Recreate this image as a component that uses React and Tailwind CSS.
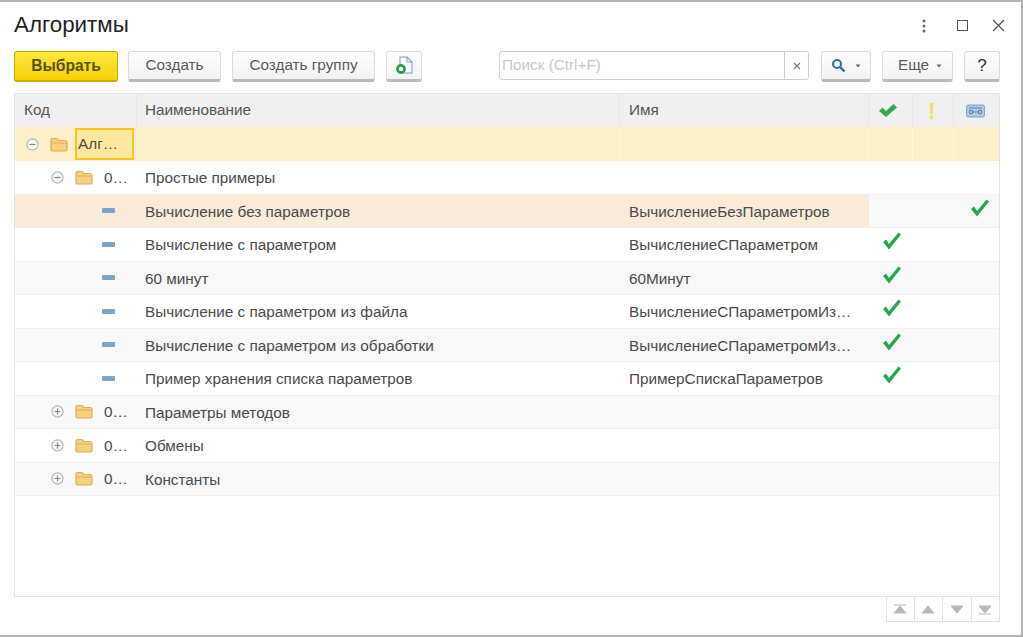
const Folder = () => (
  <svg width="18" height="15" viewBox="0 0 18 15" className="shrink-0">
    <path d="M1 3.5 Q1 1.5 3 1.5 H7 L9 3.5 H15 Q17 3.5 17 5.5 V12 Q17 14 15 14 H3 Q1 14 1 12 Z" fill="#f6d27e" stroke="#dcae5c" strokeWidth="1.2" />
    <path d="M1.5 6 H16.5" stroke="#dcae5c" strokeWidth="1" />
  </svg>
);
const Toggle = ({ open }) => (
  <svg width="13" height="13" viewBox="0 0 13 13" className="shrink-0">
    <circle cx="6.5" cy="6.5" r="5.6" fill="#f7f7f7" stroke="#b5b5b5" strokeWidth="1.1" />
    <path d={open ? "M3.5 6.5 H9.5" : "M3.5 6.5 H9.5 M6.5 3.5 V9.5"} stroke="#8a8a8a" strokeWidth="1.2" />
  </svg>
);
const Dash = () => <span className="block w-[13px] h-[5px] rounded-[1px] bg-[#7ba4c9]" />;
const Check = () => (
  <svg width="21" height="20" viewBox="0 0 21 20">
    <path d="M2 11 L5 8.5 L8 13 L17.5 1.5 L20 3.5 L8 18.5 Z" fill="#27a84a" />
  </svg>
);
const HeadCheck = () => (
  <svg width="20" height="15" viewBox="0 0 20 15">
    <path d="M1 8 L4.5 4.5 L8 8 L15.5 1 L19 4.5 L8 14 Z" fill="#2fa84f" />
  </svg>
);
const Btn = ({ w, children, cls = "" }) => (
  <div className={`h-[31px] rounded-[3px] border border-[#dcdcdc] border-b-[3px] border-b-[#bcbcbc] bg-gradient-to-b from-white to-[#f2f2f2] flex items-center justify-center text-[#5a5a5a] text-[15.3px] shrink-0 ${w} ${cls}`}>
    {children}
  </div>
);

const cols = ["w-[122px]", "w-[483px]", "w-[249px]", "w-[44px]", "w-[41px]", "w-[47px]"];

const Row = ({ bg = "bg-white", level, open, icon, code, name, id, check, checkLast, hl = "" }) => (
  <div className={`flex h-[33.5px] items-center border-b border-[#f0f0f0] text-[15.3px] text-[#4a4a4a] ${bg}`}>
    <div className={`w-[122px] shrink-0 h-full flex items-center relative ${hl} ${level === 1 ? "pl-[36px]" : "pl-[87px]"}`}>
      {icon === "dash" ? <Dash /> : (
        <div className="flex items-center">
          <Toggle open={open} />
          <span className="ml-[11px]"><Folder /></span>
          <span className="ml-[11px] pt-[2px]">{code}</span>
        </div>
      )}
    </div>
    <div className={`w-[483px] shrink-0 h-full flex items-center pl-[8px] pt-[3px] whitespace-nowrap ${hl}`}>{name}</div>
    <div className={`w-[249px] shrink-0 h-full flex items-center pl-[9px] pt-[3px] whitespace-nowrap ${hl}`}>{id}</div>
    <div className="w-[44px] shrink-0 h-full flex items-center justify-center">{check && <span className="-mt-[6px]"><Check /></span>}</div>
    <div className="w-[41px] shrink-0 h-full" />
    <div className="w-[47px] shrink-0 h-full flex items-center justify-center">{checkLast && <span className="-mt-[6px] ml-[4px]"><Check /></span>}</div>
  </div>
);

export default function App() {
  return (
    <div className="w-[1023px] h-[637px] bg-white border-t-2 border-r-2 border-b-2 border-[#b4b4b4] flex flex-col overflow-hidden font-['Liberation_Sans',Arial,sans-serif]">
      <div className="flex items-center justify-between h-[49px] pl-[14px] pr-[16px] shrink-0">
        <span className="text-[22.4px] text-[#1f1f1f] leading-none -mt-[3px]">Алгоритмы</span>
        <div className="flex items-center -mt-[2px]">
          <svg width="6" height="14" viewBox="0 0 6 14" className="mr-[30px]">
            <circle cx="3" cy="2" r="1.5" fill="#666" /><circle cx="3" cy="7" r="1.5" fill="#666" /><circle cx="3" cy="12" r="1.5" fill="#666" />
          </svg>
          <span className="block w-[11px] h-[11px] border-[1.5px] border-[#555] mr-[24px]" />
          <svg width="13" height="13" viewBox="0 0 13 13">
            <path d="M1 1 L12 12 M12 1 L1 12" stroke="#555" strokeWidth="1.2" />
          </svg>
        </div>
      </div>

      <div className="flex items-start h-[42px] pl-[14px] shrink-0">
        <div className="w-[104px] h-[31px] rounded-[3px] border border-[#c9a800] border-b-[2px] bg-gradient-to-b from-[#fde93a] to-[#f5cf00] flex items-center justify-center font-bold text-[15.6px] text-[#5c5316] shrink-0">Выбрать</div>
        <Btn w="w-[93px] ml-[10px]">Создать</Btn>
        <Btn w="w-[143px] ml-[11px]">Создать группу</Btn>
        <Btn w="w-[36px] ml-[11px]">
          <svg width="19" height="19" viewBox="0 0 19 19">
            <path d="M5 1 H12 L17 6 V17 H5 Z" fill="#fff" stroke="#7f9db8" strokeWidth="1.1" />
            <path d="M12 1 V6 H17" fill="none" stroke="#7f9db8" strokeWidth="1" />
            <circle cx="6" cy="13" r="3.6" fill="#fff" stroke="#22a045" strokeWidth="2.6" />
          </svg>
        </Btn>
        <div className="ml-[77px] w-[310px] h-[29px] rounded-[3px] border border-[#cfcfcf] flex shrink-0">
          <div className="flex-1 flex items-center pl-[2px] text-[15.3px] text-[#c8c8c8]">Поиск (Ctrl+F)</div>
          <div className="w-[24px] border-l border-[#cfcfcf] flex items-center justify-center">
            <svg width="8" height="8" viewBox="0 0 8 8"><path d="M1 1 L7 7 M7 1 L1 7" stroke="#777" strokeWidth="1.2" /></svg>
          </div>
        </div>
        <Btn w="w-[50px] ml-[12px]">
          <svg width="15" height="15" viewBox="0 0 15 15">
            <circle cx="6" cy="6" r="4" fill="none" stroke="#2f6f9f" strokeWidth="2" />
            <path d="M9 9 L13.5 13.5" stroke="#2f6f9f" strokeWidth="2.4" />
          </svg>
          <svg width="6" height="4" viewBox="0 0 6 4" className="ml-[9px]"><path d="M0.5 0.5 H5.5 L3 3.5 Z" fill="#666" /></svg>
        </Btn>
        <Btn w="w-[71px] ml-[11px] pl-[5px]">
          Еще
          <svg width="6" height="4" viewBox="0 0 6 4" className="ml-[7px]"><path d="M0.5 0.5 H5.5 L3 3.5 Z" fill="#666" /></svg>
        </Btn>
        <Btn w="w-[36px] ml-[11px]"><span className="text-[#333] text-[17px]">?</span></Btn>
      </div>

      <div className="ml-[14px] w-[986px] h-[504px] border border-[#e4e4e4] flex flex-col shrink-0 bg-white relative">
        <div className="flex h-[33px] bg-[#f0f0f0] text-[15.3px] text-[#555] shrink-0">
          <div className={`${cols[0]} shrink-0 flex items-center pl-[9px] border-r border-[#e6e6e6]`}>Код</div>
          <div className={`${cols[1]} shrink-0 flex items-center pl-[8px] border-r border-[#e6e6e6]`}>Наименование</div>
          <div className={`${cols[2]} shrink-0 flex items-center pl-[9px] border-r border-[#e6e6e6]`}>Имя</div>
          <div className={`${cols[3]} shrink-0 flex items-center justify-center pr-[6px] border-r border-[#e6e6e6]`}><HeadCheck /></div>
          <div className={`${cols[4]} shrink-0 flex items-center justify-center pr-[4px] border-r border-[#e6e6e6]`}>
            <svg width="7" height="18" viewBox="0 0 7 18"><path d="M1.5 1 H5.5 L4.8 12 H2.2 Z" fill="#efe06a" /><circle cx="3.5" cy="15.5" r="2" fill="#efe06a" /></svg>
          </div>
          <div className={`${cols[5]} shrink-0 flex items-center justify-center pr-[4px]`}>
            <svg width="19" height="14" viewBox="0 0 19 14">
              <rect x="0.5" y="1" width="18" height="12" rx="1.5" fill="#a9cbe8" stroke="#7ea7c8" />
              <circle cx="5" cy="8" r="1.8" fill="none" stroke="#4f7ea3" />
              <circle cx="14" cy="8" r="1.8" fill="none" stroke="#4f7ea3" />
              <path d="M6.8 8 H12.2 M3 4 H16" stroke="#4f7ea3" strokeWidth="0.8" />
            </svg>
          </div>
        </div>

        <div className="flex h-[34px] items-stretch bg-[#fcefc9] text-[15.3px] text-[#4a4a4a] shrink-0">
          <div className="w-[122px] shrink-0 flex items-center pl-[11px]">
            <Toggle open />
            <span className="ml-[11px]"><Folder /></span>
            <div className="ml-[7px] w-[59px] h-[32px] bg-[#fde89e] border-2 border-[#f3c526] flex items-center pl-[1px] text-[#4a4a4a] whitespace-nowrap">Алг…</div>
          </div>
          <div className="w-[483px] shrink-0 border-r border-[#fdf5dc]" />
          <div className="w-[249px] shrink-0 border-r border-[#fdf5dc]" />
          <div className="w-[44px] shrink-0 border-r border-[#fdf5dc]" />
          <div className="w-[41px] shrink-0 border-r border-[#fdf5dc]" />
        </div>

        <Row level={1} open code="0…" name="Простые примеры" />
        <Row bg="bg-[#f8f8f8]" hl="bg-[#faebd9]" icon="dash" name="Вычисление без параметров" id="ВычислениеБезПараметров" checkLast />
        <Row icon="dash" name="Вычисление с параметром" id="ВычислениеСПараметром" check />
        <Row bg="bg-[#f8f8f8]" icon="dash" name="60 минут" id="60Минут" check />
        <Row icon="dash" name="Вычисление с параметром из файла" id="ВычислениеСПараметромИз…" check />
        <Row bg="bg-[#f8f8f8]" icon="dash" name="Вычисление с параметром из обработки" id="ВычислениеСПараметромИз…" check />
        <Row icon="dash" name="Пример хранения списка параметров" id="ПримерСпискаПараметров" check />
        <Row bg="bg-[#f8f8f8]" level={1} code="0…" name="Параметры методов" />
        <Row level={1} code="0…" name="Обмены" />
        <Row bg="bg-[#f8f8f8]" level={1} code="0…" name="Константы" />
      </div>

      <div className="flex justify-end pr-[21px] shrink-0">
        {[
          "M2 1 H14 M8 2 L14 9 H2 Z",
          "M8 2 L14 9 H2 Z",
          "M2 2 H14 L8 9 Z",
          "M2 2 H14 L8 9 Z M2 10 H14",
        ].map((d, i) => (
          <div key={i} className="w-[28.5px] h-[25px] border-b border-r border-[#e2e2e2] first:border-l flex items-center justify-center">
            <svg width="16" height="11" viewBox="0 0 16 11"><path d={d} fill="#b9b9b9" stroke="#b9b9b9" strokeWidth="1" /></svg>
          </div>
        ))}
      </div>
    </div>
  );
}
